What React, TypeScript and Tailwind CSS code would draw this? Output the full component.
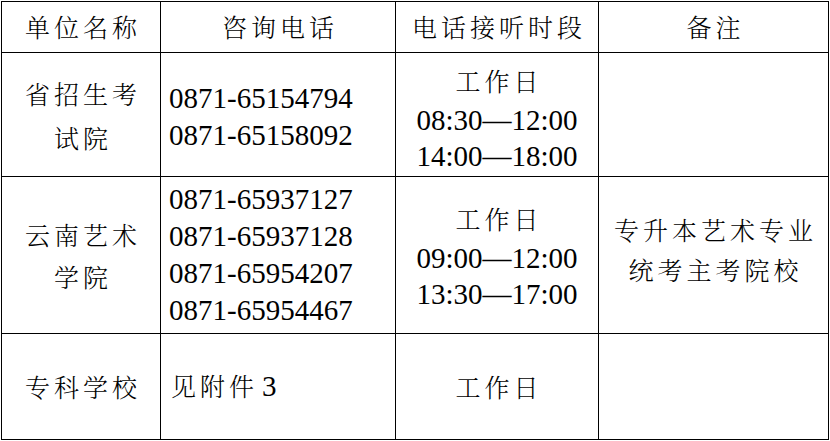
import React from "react";

const zh =
  "font-[family-name:'Noto_Serif_CJK_SC','Noto_Sans_CJK_SC',serif] font-light text-[25px] tracking-[4px]";
const num =
  "font-[family-name:'Liberation_Serif','Noto_Serif_CJK_SC','Noto_Sans_CJK_SC',serif] text-[29px]";

const cell = "bg-white flex flex-col justify-center items-center";

function Times({ lines, first }: { lines: string[]; first?: string }) {
  return (
    <>
      <div className={`${zh} leading-[40px] pl-[4px]`}>{first ?? "工作日"}</div>
      <div className="mt-[2px]">
        {lines.map((l) => (
          <div key={l} className={`${num} leading-[36px] text-center`}>
            {l}
          </div>
        ))}
      </div>
    </>
  );
}

export default function App() {
  return (
    <div className="min-h-[441px] bg-white pt-[1px] pl-[1px] text-black">
      <div className="grid w-fit grid-cols-[158px_234px_202px_229px] grid-rows-[50px_123px_156px_105px] gap-[1px] bg-black p-[1px]">
        {/* header */}
        <div className={`${cell} ${zh} pl-[4px]`}>单位名称</div>
        <div className={`${cell} ${zh} pl-[4px]`}>咨询电话</div>
        <div className={`${cell} ${zh} pl-[4px]`}>电话接听时段</div>
        <div className={`${cell} ${zh} pl-[4px]`}>备注</div>

        {/* row 1 */}
        <div className={`${cell} ${zh} leading-[44px] pl-[4px]`}>
          <div>省招生考</div>
          <div>试院</div>
        </div>
        <div className={`${cell} !items-start pl-[8px] pt-[5px] ${num} leading-[37px]`}>
          <div>0871-65154794</div>
          <div>0871-65158092</div>
        </div>
        <div className={`${cell} pt-[5px]`}>
          <Times lines={["08:30—12:00", "14:00—18:00"]} />
        </div>
        <div className={cell}></div>

        {/* row 2 */}
        <div className={`${cell} ${zh} leading-[42px] pl-[4px]`}>
          <div>云南艺术</div>
          <div>学院</div>
        </div>
        <div className={`${cell} !items-start pl-[8px] ${num} leading-[37px]`}>
          <div>0871-65937127</div>
          <div>0871-65937128</div>
          <div>0871-65954207</div>
          <div>0871-65954467</div>
        </div>
        <div className={cell}>
          <Times lines={["09:00—12:00", "13:30—17:00"]} />
        </div>
        <div className={`${cell} ${zh} leading-[40px] pb-[13px] pl-[4px]`}>
          <div>专升本艺术专业</div>
          <div>统考主考院校</div>
        </div>

        {/* row 3 */}
        <div className={`${cell} ${zh} pl-[4px]`}>专科学校</div>
        <div className={`${cell} !items-start pl-[10px]`}>
          <div className="flex items-baseline">
            <span className={zh}>见附件</span>
            <span className={`${num} pl-[4px]`}>3</span>
          </div>
        </div>
        <div className={`${cell} ${zh} pl-[4px]`}>工作日</div>
        <div className={cell}></div>
      </div>
    </div>
  );
}
